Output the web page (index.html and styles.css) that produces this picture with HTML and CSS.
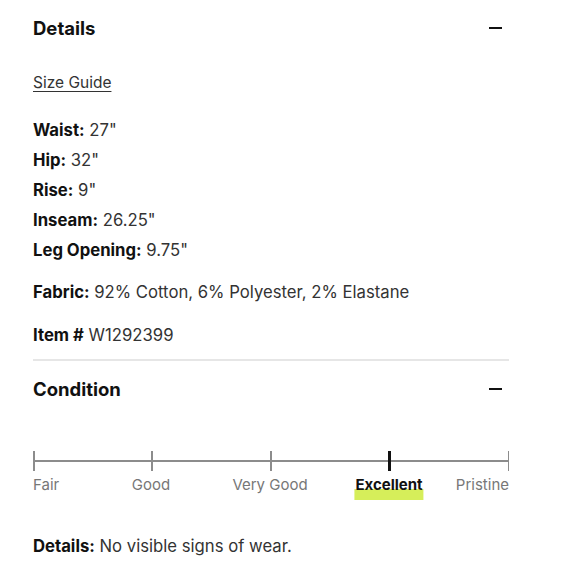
FILE: index.html
```html
<!DOCTYPE html>
<html>
<head>
<meta charset="utf-8">
<link rel="stylesheet" href="styles.css">
</head>
<body>
<div class="panel">
  <section class="section details">
    <div class="head">
      <h2>Details</h2>
      <span class="minus"></span>
    </div>
    <a class="guide" href="#">Size Guide</a>
    <ul class="measures">
      <li><b>Waist:</b> 27"</li>
      <li><b>Hip:</b> 32"</li>
      <li><b>Rise:</b> 9"</li>
      <li><b>Inseam:</b> 26.25"</li>
      <li><b>Leg Opening:</b> 9.75"</li>
    </ul>
    <p class="fabric"><b>Fabric:</b> 92% Cotton, 6% Polyester, 2% Elastane</p>
    <p class="item"><b>Item #</b> W1292399</p>
  </section>
  <section class="section condition">
    <div class="head">
      <h2>Condition</h2>
      <span class="minus"></span>
    </div>
    <div class="scale">
      <div class="track">
        <span class="tick t0"></span>
        <span class="tick t1"></span>
        <span class="tick t2"></span>
        <span class="tick t3 active"></span>
        <span class="tick t4"></span>
      </div>
      <div class="labels">
        <span class="lbl l0">Fair</span>
        <span class="lbl l1">Good</span>
        <span class="lbl l2">Very Good</span>
        <span class="lbl l3 active">Excellent</span>
        <span class="lbl l4">Pristine</span>
      </div>
    </div>
    <p class="cond-details"><b>Details:</b> No visible signs of wear.</p>
  </section>
</div>
</body>
</html>
```

FILE: styles.css
```css
* { box-sizing: border-box; }
html, body { margin: 0; padding: 0; background: #fff; }
body {
  font-family: Inter, "Noto Sans", sans-serif;
  color: #222;
}
.panel {
  width: 476px;
  margin-left: 33px;
}
.head {
  display: flex;
  justify-content: space-between;
  align-items: center;
}
h2 {
  margin: 0;
  font-size: 18.5px;
  font-weight: 700;
  color: #111;
  line-height: 22px;
}
.minus {
  display: block;
  width: 13px;
  height: 2.5px;
  background: #111;
  margin-right: 7px;
}
.details { padding-top: 17px; border-bottom: 2px solid #e6e6e6; padding-bottom: 14px; }
.guide {
  display: inline-block;
  margin-top: 34px;
  font-size: 15.5px;
  color: #333;
  text-decoration: underline;
  text-underline-offset: 3px;
  text-decoration-thickness: 1px;
  line-height: 20px;
}
.measures {
  list-style: none;
  margin: 22px 0 0;
  padding: 0;
  font-size: 16.7px;
  line-height: 30px;
  color: #333;
}
b { color: #111; font-weight: 700; }
.fabric { margin: 17px 0 0; font-size: 16.7px; line-height: 20px; color: #333; }
.item { margin: 23px 0 0; font-size: 16.7px; line-height: 20px; color: #333; }
.condition { padding-top: 17px; }
.scale { margin-top: 51px; }
.track {
  position: relative;
  height: 20px;
}
.track::before {
  content: "";
  position: absolute;
  left: 0; right: 0;
  top: 9px;
  height: 1.5px;
  background: #8c8c8c;
}
.tick {
  position: absolute;
  top: 0;
  width: 1.5px;
  height: 20px;
  background: #8c8c8c;
}
.t0 { left: 0; }
.t1 { left: 118px; }
.t2 { left: 237px; }
.t3 { left: 355px; }
.t4 { right: 0; }
.tick.active { width: 2.5px; background: #111; }
.labels {
  position: relative;
  height: 30px;
  margin-top: 4px;
  font-size: 15px;
  color: #777;
  line-height: 20px;
}
.lbl { position: absolute; top: 0; white-space: nowrap; }
.l0 { left: 0; }
.l1 { left: 118px; transform: translateX(-50%); }
.l2 { left: 237px; transform: translateX(-50%); }
.l3 { left: 356px; transform: translateX(-50%); }
.l4 { right: 0; }
.lbl.active {
  font-weight: 700;
  color: #111;
  background: linear-gradient(to bottom, transparent 0, transparent 14px, #d6ee5a 14px, #d6ee5a 25px);
  padding: 0 1px 5px;
}
.cond-details { margin: 31px 0 0; font-size: 16.7px; line-height: 20px; color: #333; }
```
